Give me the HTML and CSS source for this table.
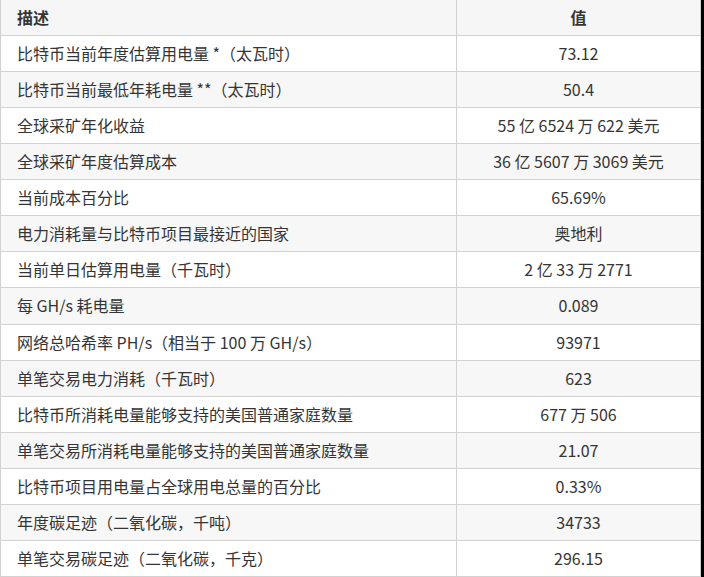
FILE: index.html
```html
<!DOCTYPE html>
<html lang="zh-CN">
<head>
<meta charset="utf-8">
<link rel="stylesheet" href="styles.css">
</head>
<body>
<table class="data">
  <thead>
    <tr><th class="desc">描述</th><th class="val">值</th></tr>
  </thead>
  <tbody>
    <tr><td class="desc">比特币当前年度估算用电量 *（太瓦时）</td><td class="val">73.12</td></tr>
    <tr><td class="desc">比特币当前最低年耗电量 **（太瓦时）</td><td class="val">50.4</td></tr>
    <tr><td class="desc">全球采矿年化收益</td><td class="val">55 亿 6524 万 622 美元</td></tr>
    <tr><td class="desc">全球采矿年度估算成本</td><td class="val">36 亿 5607 万 3069 美元</td></tr>
    <tr><td class="desc">当前成本百分比</td><td class="val">65.69%</td></tr>
    <tr><td class="desc">电力消耗量与比特币项目最接近的国家</td><td class="val">奥地利</td></tr>
    <tr><td class="desc">当前单日估算用电量（千瓦时）</td><td class="val">2 亿 33 万 2771</td></tr>
    <tr><td class="desc">每 GH/s 耗电量</td><td class="val">0.089</td></tr>
    <tr><td class="desc">网络总哈希率 PH/s（相当于 100 万 GH/s）</td><td class="val">93971</td></tr>
    <tr><td class="desc">单笔交易电力消耗（千瓦时）</td><td class="val">623</td></tr>
    <tr><td class="desc">比特币所消耗电量能够支持的美国普通家庭数量</td><td class="val">677 万 506</td></tr>
    <tr><td class="desc">单笔交易所消耗电量能够支持的美国普通家庭数量</td><td class="val">21.07</td></tr>
    <tr><td class="desc">比特币项目用电量占全球用电总量的百分比</td><td class="val">0.33%</td></tr>
    <tr><td class="desc">年度碳足迹（二氧化碳，千吨）</td><td class="val">34733</td></tr>
    <tr><td class="desc">单笔交易碳足迹（二氧化碳，千克）</td><td class="val">296.15</td></tr>
  </tbody>
</table>
</body>
</html>
```
FILE: styles.css
```css
html, body {
  margin: 0;
  padding: 0;
}
body {
  background: #000;
  width: 704px;
  height: 577px;
  overflow: hidden;
  font-family: "Noto Sans CJK SC", "Noto Sans", sans-serif;
  font-size: 16px;
  color: #353535;
}
.data {
  border-collapse: separate;
  border-spacing: 0;
  width: 701px;
  height: 577px;
  background: #fff;
  border-left: 1px solid #d2d2d2;
  border-right: 1px solid #d2d2d2;
  table-layout: fixed;
}
.data th, .data td {
  padding: 0 16px;
  height: 35px;
  line-height: 35px;
  border-bottom: 1px solid #d2d2d2;
  white-space: nowrap;
  font-weight: normal;
  box-sizing: content-box;
}
.data th {
  font-weight: bold;
  background: #f6f6f6;
}
.data .desc {
  width: 423px;
  text-align: left;
  border-right: 1px solid #d2d2d2;
}
.data .val {
  text-align: center;
}
.data tbody tr:nth-child(even) td {
  background: #f7f7f7;
}
```
